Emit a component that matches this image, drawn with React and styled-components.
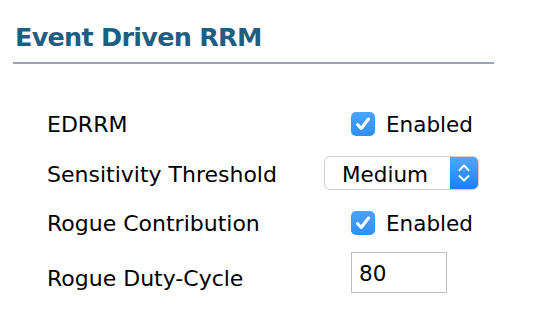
import React from "react";
import styled, { createGlobalStyle } from "styled-components";

const Global = createGlobalStyle`
  html, body { margin: 0; padding: 0; background: #fff; }
  body { font-family: "DejaVu Sans", Verdana, sans-serif; color: #000; }
`;

const Page = styled.div`
  width: 554px;
  height: 328px;
  box-sizing: border-box;
  padding: 22px 0 0 13px;
  overflow: hidden;
`;

const Title = styled.h1`
  margin: 0 0 0 2px;
  font-family: "DejaVu Sans", Verdana, sans-serif;
  font-size: 25.5px;
  line-height: 30px;
  font-weight: bold;
  color: #1f5e82;
  letter-spacing: -0.75px;
`;

const Rule = styled.div`
  width: 481px;
  height: 2px;
  margin-top: 10px;
  background: #9ba3bf;
`;

const Form = styled.div`
  display: grid;
  grid-template-columns: 277px 1fr;
  grid-auto-rows: 49.5px;
  margin: 35px 0 0 34px;
`;

const Label = styled.div`
  display: flex;
  align-items: center;
  padding-top: ${(p) => 2 + (p.$shift || 0) * 2}px;
  font-size: 22px;
  color: #000;
`;

const Control = styled.div`
  display: flex;
  align-items: center;
  padding-left: ${(p) => p.$indent || 0}px;
`;

const Box = styled.span`
  width: 24px;
  height: 24px;
  border-radius: 5px;
  background: linear-gradient(#4aa3fd, #2f8ff9);
  display: inline-flex;
  align-items: center;
  justify-content: center;
  flex: none;
`;

const CheckText = styled.span`
  margin-left: 11px;
  font-size: 21.5px;
  padding-top: 2px;
`;

const Select = styled.div`
  width: 155px;
  height: 34px;
  box-sizing: border-box;
  border: 1px solid #cfcfcf;
  border-radius: 6px;
  display: flex;
  align-items: stretch;
  background: #fff;
  overflow: hidden;
`;

const SelectText = styled.span`
  flex: 1;
  display: flex;
  align-items: center;
  padding: 2px 0 0 17px;
  font-size: 21.5px;
`;

const SelectArrow = styled.span`
  width: 28px;
  background: linear-gradient(#52a8fd, #1a7ef7);
  display: flex;
  align-items: center;
  justify-content: center;
`;

const TextInput = styled.div`
  width: 96px;
  height: 41px;
  box-sizing: border-box;
  border: 1px solid #bdbdbd;
  display: flex;
  align-items: center;
  padding: 2px 0 0 7px;
  font-size: 21.5px;
`;

const Checkbox = ({ label }) => (
  <>
    <Box>
      <svg width="24" height="24" viewBox="0 0 24 24">
        <path d="M6.5 12.5 L10.2 16.5 L17.5 7" fill="none" stroke="#fff" strokeWidth="3" strokeLinecap="round" strokeLinejoin="round" />
      </svg>
    </Box>
    <CheckText>{label}</CheckText>
  </>
);

export default function App() {
  return (
    <Page>
      <Global />
      <Title>Event Driven RRM</Title>
      <Rule />
      <Form>
        <Label>EDRRM</Label>
        <Control $indent={27}><Checkbox label="Enabled" /></Control>
        <Label>Sensitivity Threshold</Label>
        <Control>
          <Select>
            <SelectText>Medium</SelectText>
            <SelectArrow>
              <svg width="14" height="22" viewBox="0 0 14 22">
                <path d="M2.5 8 L7 3.5 L11.5 8 M2.5 14 L7 18.5 L11.5 14" fill="none" stroke="#fff" strokeWidth="2" strokeLinecap="round" strokeLinejoin="round" />
              </svg>
            </SelectArrow>
          </Select>
        </Control>
        <Label>Rogue Contribution</Label>
        <Control $indent={27}><Checkbox label="Enabled" /></Control>
        <Label $shift={5}>Rogue Duty-Cycle</Label>
        <Control $indent={27}><TextInput>80</TextInput></Control>
      </Form>
    </Page>
  );
}
